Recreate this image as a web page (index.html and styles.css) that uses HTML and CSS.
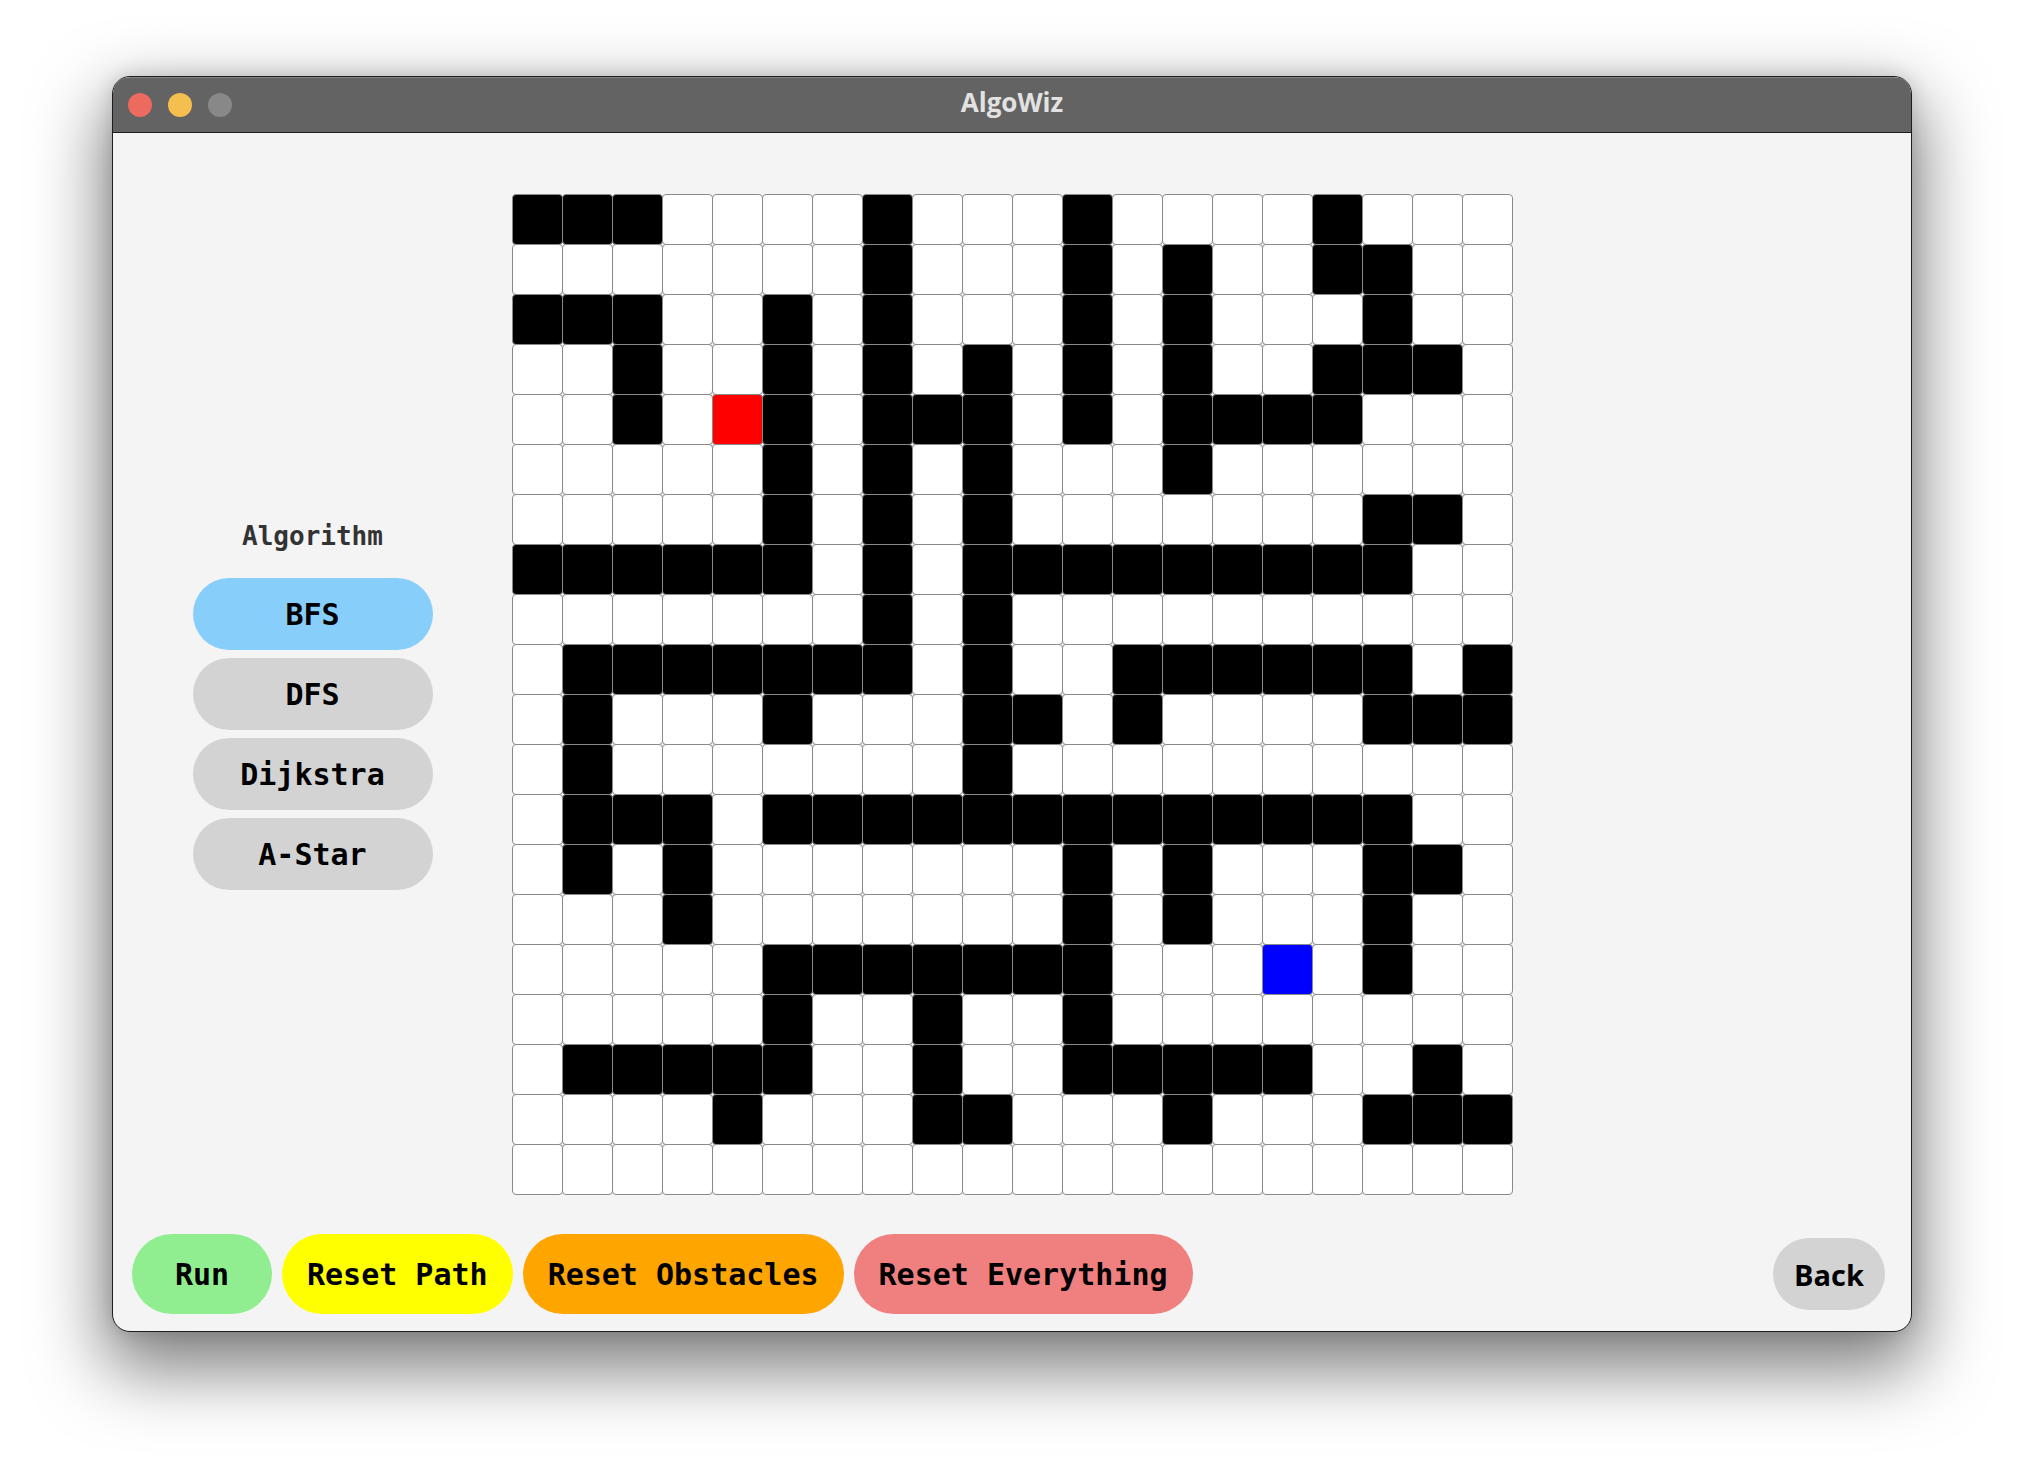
FILE: index.html
```html
<!DOCTYPE html>
<html lang="en">
<head>
<meta charset="utf-8">
<title>AlgoWiz</title>
<link rel="stylesheet" href="styles.css">
</head>
<body>
<div class="window">
  <header class="titlebar">
    <div class="lights">
      <span class="light red"></span>
      <span class="light yellow"></span>
      <span class="light gray"></span>
    </div>
    <div class="title">AlgoWiz</div>
    <div></div>
  </header>
  <main class="content">
    <section class="main">
      <aside class="sidebar">
        <div class="algo-label">Algorithm</div>
        <div class="algo-list">
          <button class="algo active">BFS</button>
          <button class="algo">DFS</button>
          <button class="algo">Dijkstra</button>
          <button class="algo">A-Star</button>
        </div>
      </aside>
      <div class="board">
<i class="c w"></i><i class="c w"></i><i class="c w"></i><i class="c"></i><i class="c"></i><i class="c"></i><i class="c"></i><i class="c w"></i><i class="c"></i><i class="c"></i><i class="c"></i><i class="c w"></i><i class="c"></i><i class="c"></i><i class="c"></i><i class="c"></i><i class="c w"></i><i class="c"></i><i class="c"></i><i class="c"></i>
<i class="c"></i><i class="c"></i><i class="c"></i><i class="c"></i><i class="c"></i><i class="c"></i><i class="c"></i><i class="c w"></i><i class="c"></i><i class="c"></i><i class="c"></i><i class="c w"></i><i class="c"></i><i class="c w"></i><i class="c"></i><i class="c"></i><i class="c w"></i><i class="c w"></i><i class="c"></i><i class="c"></i>
<i class="c w"></i><i class="c w"></i><i class="c w"></i><i class="c"></i><i class="c"></i><i class="c w"></i><i class="c"></i><i class="c w"></i><i class="c"></i><i class="c"></i><i class="c"></i><i class="c w"></i><i class="c"></i><i class="c w"></i><i class="c"></i><i class="c"></i><i class="c"></i><i class="c w"></i><i class="c"></i><i class="c"></i>
<i class="c"></i><i class="c"></i><i class="c w"></i><i class="c"></i><i class="c"></i><i class="c w"></i><i class="c"></i><i class="c w"></i><i class="c"></i><i class="c w"></i><i class="c"></i><i class="c w"></i><i class="c"></i><i class="c w"></i><i class="c"></i><i class="c"></i><i class="c w"></i><i class="c w"></i><i class="c w"></i><i class="c"></i>
<i class="c"></i><i class="c"></i><i class="c w"></i><i class="c"></i><i class="c s"></i><i class="c w"></i><i class="c"></i><i class="c w"></i><i class="c w"></i><i class="c w"></i><i class="c"></i><i class="c w"></i><i class="c"></i><i class="c w"></i><i class="c w"></i><i class="c w"></i><i class="c w"></i><i class="c"></i><i class="c"></i><i class="c"></i>
<i class="c"></i><i class="c"></i><i class="c"></i><i class="c"></i><i class="c"></i><i class="c w"></i><i class="c"></i><i class="c w"></i><i class="c"></i><i class="c w"></i><i class="c"></i><i class="c"></i><i class="c"></i><i class="c w"></i><i class="c"></i><i class="c"></i><i class="c"></i><i class="c"></i><i class="c"></i><i class="c"></i>
<i class="c"></i><i class="c"></i><i class="c"></i><i class="c"></i><i class="c"></i><i class="c w"></i><i class="c"></i><i class="c w"></i><i class="c"></i><i class="c w"></i><i class="c"></i><i class="c"></i><i class="c"></i><i class="c"></i><i class="c"></i><i class="c"></i><i class="c"></i><i class="c w"></i><i class="c w"></i><i class="c"></i>
<i class="c w"></i><i class="c w"></i><i class="c w"></i><i class="c w"></i><i class="c w"></i><i class="c w"></i><i class="c"></i><i class="c w"></i><i class="c"></i><i class="c w"></i><i class="c w"></i><i class="c w"></i><i class="c w"></i><i class="c w"></i><i class="c w"></i><i class="c w"></i><i class="c w"></i><i class="c w"></i><i class="c"></i><i class="c"></i>
<i class="c"></i><i class="c"></i><i class="c"></i><i class="c"></i><i class="c"></i><i class="c"></i><i class="c"></i><i class="c w"></i><i class="c"></i><i class="c w"></i><i class="c"></i><i class="c"></i><i class="c"></i><i class="c"></i><i class="c"></i><i class="c"></i><i class="c"></i><i class="c"></i><i class="c"></i><i class="c"></i>
<i class="c"></i><i class="c w"></i><i class="c w"></i><i class="c w"></i><i class="c w"></i><i class="c w"></i><i class="c w"></i><i class="c w"></i><i class="c"></i><i class="c w"></i><i class="c"></i><i class="c"></i><i class="c w"></i><i class="c w"></i><i class="c w"></i><i class="c w"></i><i class="c w"></i><i class="c w"></i><i class="c"></i><i class="c w"></i>
<i class="c"></i><i class="c w"></i><i class="c"></i><i class="c"></i><i class="c"></i><i class="c w"></i><i class="c"></i><i class="c"></i><i class="c"></i><i class="c w"></i><i class="c w"></i><i class="c"></i><i class="c w"></i><i class="c"></i><i class="c"></i><i class="c"></i><i class="c"></i><i class="c w"></i><i class="c w"></i><i class="c w"></i>
<i class="c"></i><i class="c w"></i><i class="c"></i><i class="c"></i><i class="c"></i><i class="c"></i><i class="c"></i><i class="c"></i><i class="c"></i><i class="c w"></i><i class="c"></i><i class="c"></i><i class="c"></i><i class="c"></i><i class="c"></i><i class="c"></i><i class="c"></i><i class="c"></i><i class="c"></i><i class="c"></i>
<i class="c"></i><i class="c w"></i><i class="c w"></i><i class="c w"></i><i class="c"></i><i class="c w"></i><i class="c w"></i><i class="c w"></i><i class="c w"></i><i class="c w"></i><i class="c w"></i><i class="c w"></i><i class="c w"></i><i class="c w"></i><i class="c w"></i><i class="c w"></i><i class="c w"></i><i class="c w"></i><i class="c"></i><i class="c"></i>
<i class="c"></i><i class="c w"></i><i class="c"></i><i class="c w"></i><i class="c"></i><i class="c"></i><i class="c"></i><i class="c"></i><i class="c"></i><i class="c"></i><i class="c"></i><i class="c w"></i><i class="c"></i><i class="c w"></i><i class="c"></i><i class="c"></i><i class="c"></i><i class="c w"></i><i class="c w"></i><i class="c"></i>
<i class="c"></i><i class="c"></i><i class="c"></i><i class="c w"></i><i class="c"></i><i class="c"></i><i class="c"></i><i class="c"></i><i class="c"></i><i class="c"></i><i class="c"></i><i class="c w"></i><i class="c"></i><i class="c w"></i><i class="c"></i><i class="c"></i><i class="c"></i><i class="c w"></i><i class="c"></i><i class="c"></i>
<i class="c"></i><i class="c"></i><i class="c"></i><i class="c"></i><i class="c"></i><i class="c w"></i><i class="c w"></i><i class="c w"></i><i class="c w"></i><i class="c w"></i><i class="c w"></i><i class="c w"></i><i class="c"></i><i class="c"></i><i class="c"></i><i class="c t"></i><i class="c"></i><i class="c w"></i><i class="c"></i><i class="c"></i>
<i class="c"></i><i class="c"></i><i class="c"></i><i class="c"></i><i class="c"></i><i class="c w"></i><i class="c"></i><i class="c"></i><i class="c w"></i><i class="c"></i><i class="c"></i><i class="c w"></i><i class="c"></i><i class="c"></i><i class="c"></i><i class="c"></i><i class="c"></i><i class="c"></i><i class="c"></i><i class="c"></i>
<i class="c"></i><i class="c w"></i><i class="c w"></i><i class="c w"></i><i class="c w"></i><i class="c w"></i><i class="c"></i><i class="c"></i><i class="c w"></i><i class="c"></i><i class="c"></i><i class="c w"></i><i class="c w"></i><i class="c w"></i><i class="c w"></i><i class="c w"></i><i class="c"></i><i class="c"></i><i class="c w"></i><i class="c"></i>
<i class="c"></i><i class="c"></i><i class="c"></i><i class="c"></i><i class="c w"></i><i class="c"></i><i class="c"></i><i class="c"></i><i class="c w"></i><i class="c w"></i><i class="c"></i><i class="c"></i><i class="c"></i><i class="c w"></i><i class="c"></i><i class="c"></i><i class="c"></i><i class="c w"></i><i class="c w"></i><i class="c w"></i>
<i class="c"></i><i class="c"></i><i class="c"></i><i class="c"></i><i class="c"></i><i class="c"></i><i class="c"></i><i class="c"></i><i class="c"></i><i class="c"></i><i class="c"></i><i class="c"></i><i class="c"></i><i class="c"></i><i class="c"></i><i class="c"></i><i class="c"></i><i class="c"></i><i class="c"></i><i class="c"></i>
      </div>
      <div></div>
    </section>
    <footer class="actions">
      <button class="act run">Run</button>
      <button class="act path">Reset Path</button>
      <button class="act obst">Reset Obstacles</button>
      <button class="act every">Reset Everything</button>
      <button class="back">Back</button>
    </footer>
  </main>
</div>
</body>
</html>
```
FILE: styles.css
```css
html, body {
  margin: 0;
  padding: 0;
  background: #ffffff;
}

body {
  box-sizing: border-box;
  min-height: 100vh;
  padding-top: 76px;
  font-family: "DejaVu Sans Mono", monospace;
}

.window {
  box-sizing: border-box;
  width: 1800px;
  margin: 0 auto;
  border: 1px solid #1e1e1e;
  border-radius: 18px;
  overflow: hidden;
  background: #f4f4f4;
  box-shadow: 0 30px 70px 8px rgba(0, 0, 0, 0.5), 0 0 20px rgba(0, 0, 0, 0.15);
  display: flex;
  flex-direction: column;
}

.titlebar {
  height: 55px;
  background: #626362;
  border-bottom: 1px solid #1c1c1c;
  box-shadow: inset 0 1px 0 rgba(255, 255, 255, 0.22);
  display: grid;
  grid-template-columns: 1fr auto 1fr;
  align-items: center;
}

.lights {
  display: flex;
  gap: 16px;
  padding-left: 15px;
  padding-top: 1px;
}

.light {
  width: 24px;
  height: 24px;
  border-radius: 50%;
}
.light.red { background: #ec6a5e; }
.light.yellow { background: #f4bf4f; }
.light.gray { background: #878887; }

.title {
  font-family: "Open Sans", "Liberation Sans", sans-serif;
  font-weight: 700;
  font-size: 26px;
  color: #e2e2e2;
  margin-bottom: 6px;
}

.content {
  padding: 61px 0 17px;
  display: flex;
  flex-direction: column;
}

.main {
  display: grid;
  grid-template-columns: 1fr 1000px 1fr;
}

.sidebar {
  justify-self: center;
  align-self: start;
  margin-top: 327px;
  display: flex;
  flex-direction: column;
  align-items: center;
}

.algo-label {
  font-family: "DejaVu Sans Mono", monospace;
  font-weight: 700;
  font-size: 26px;
  line-height: 30px;
  color: #333333;
  margin-bottom: 27px;
}

.algo-list {
  display: flex;
  flex-direction: column;
  gap: 8px;
}

.algo {
  width: 240px;
  height: 72px;
  border: none;
  border-radius: 36px;
  background: #d3d3d3;
  color: #000;
  font-family: "DejaVu Sans Mono", monospace;
  font-weight: 700;
  font-size: 30px;
  padding: 0;
}
.algo.active { background: #87cefa; }

.board {
  width: 1000px;
  height: 1000px;
  display: grid;
  grid-template-columns: repeat(20, 50px);
  grid-auto-rows: 50px;
  background: #ffffff;
}

.c {
  display: block;
  width: 51px;
  height: 51px;
  box-sizing: border-box;
  border: 1px solid #8a8a8a;
  border-radius: 4px;
  background: #ffffff;
}
.c.w { background: #000000; }
.c.s { background: #ff0000; }
.c.t { background: #0000ff; }

.actions {
  margin-top: 40px;
  height: 80px;
  padding: 0 26px 0 19px;
  display: flex;
  align-items: center;
  gap: 10px;
}

.act {
  height: 80px;
  border: none;
  border-radius: 40px;
  padding: 0 25px;
  color: #000;
  font-family: "DejaVu Sans Mono", monospace;
  font-weight: 700;
  font-size: 30px;
}
.act.run { min-width: 140px; background: #90ee90; }
.act.path { background: #ffff00; }
.act.obst { background: #ffa500; }
.act.every { background: #f08080; }

.back {
  margin-left: auto;
  height: 72px;
  border: none;
  border-radius: 36px;
  padding: 0 21px;
  background: #d3d3d3;
  color: #000;
  font-family: "Open Sans", "Liberation Sans", sans-serif;
  font-weight: 700;
  font-size: 29px;
}
```
